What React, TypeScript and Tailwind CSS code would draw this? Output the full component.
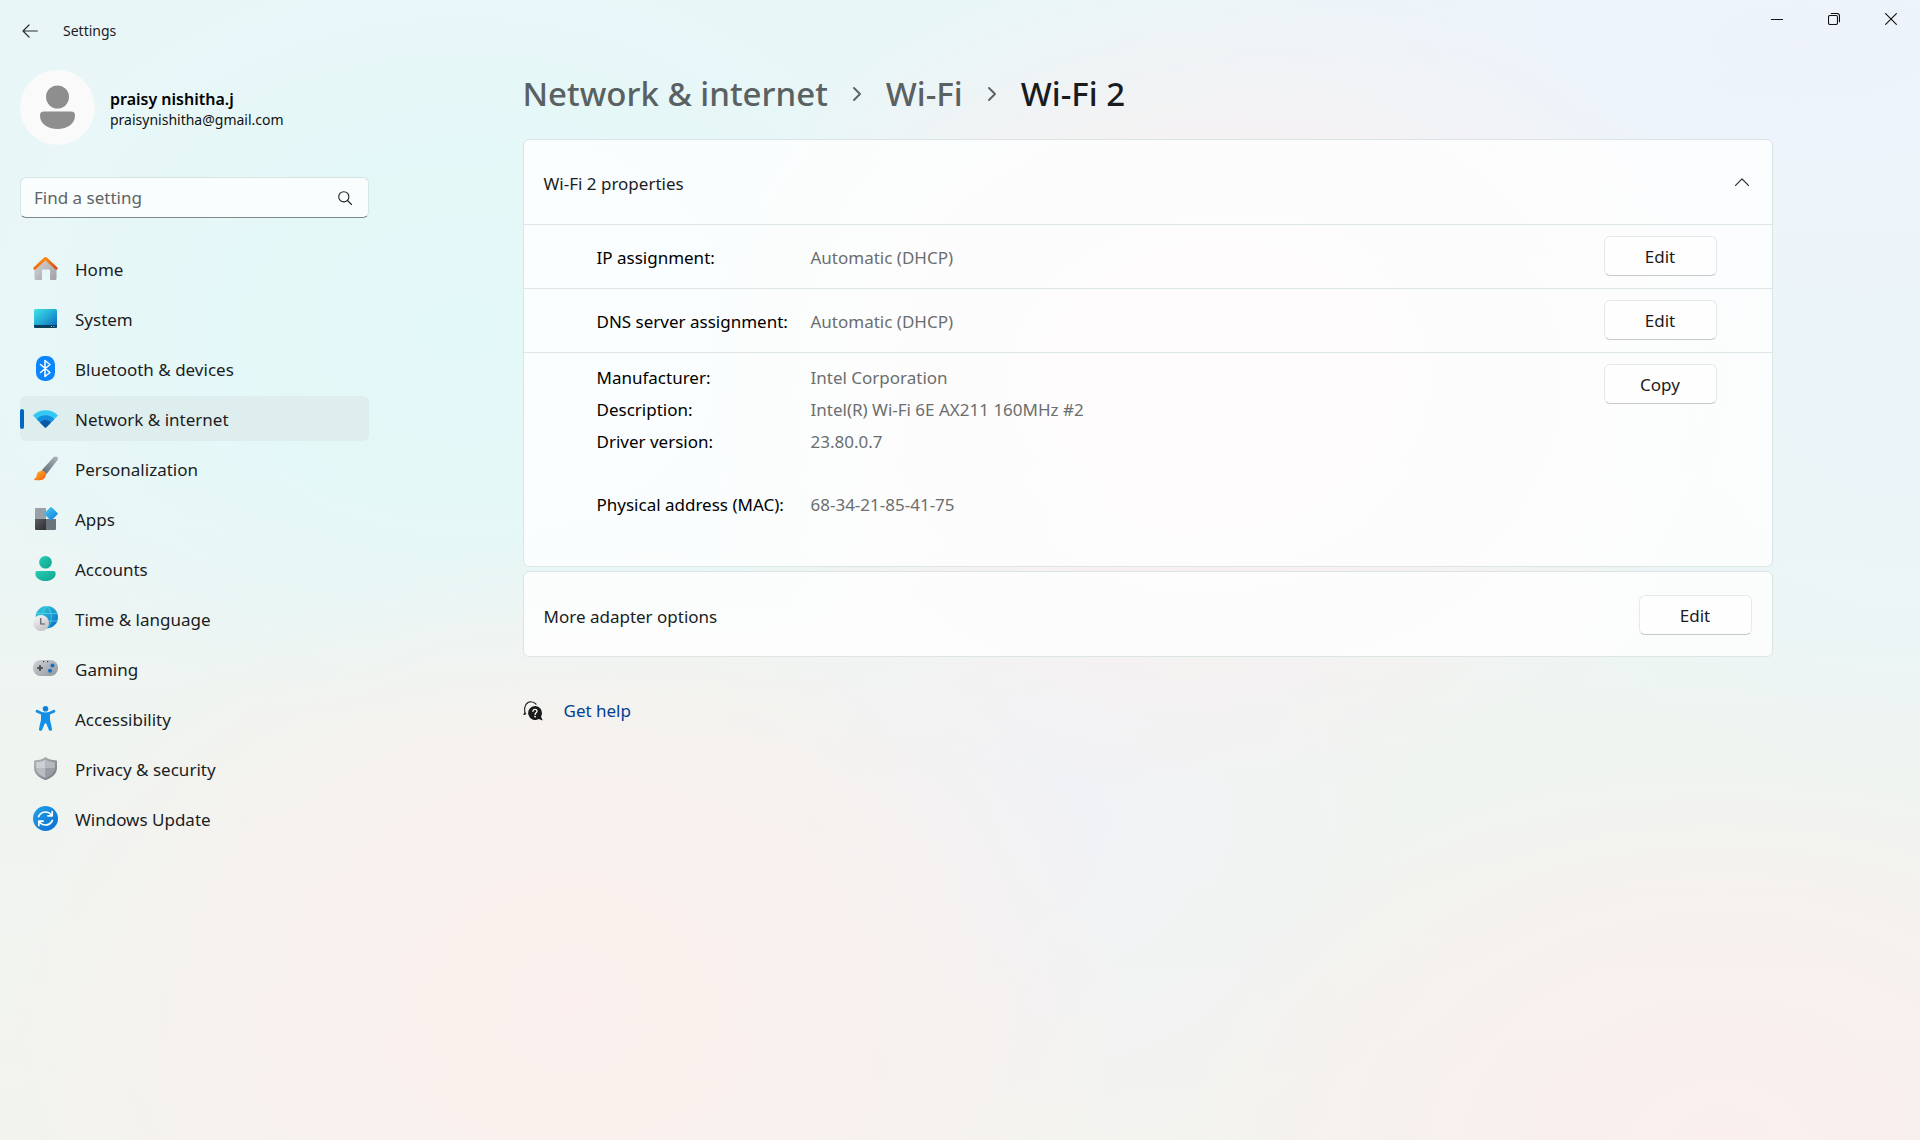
import React, { useState } from "react";

function HomeIcon() {
  return (
    <svg viewBox="0 0 25 25" className="size-[25px]" aria-hidden="true">
      <defs>
        <linearGradient id="home-wall" x1="0" y1="0" x2="1" y2="1">
          <stop offset="0" stopColor="#d8d8da" />
          <stop offset="1" stopColor="#9f9fa3" />
        </linearGradient>
        <linearGradient id="home-roof" x1="0" y1="0" x2="1" y2="0">
          <stop offset="0" stopColor="#f06a0c" />
          <stop offset="0.5" stopColor="#fb8a0c" />
          <stop offset="1" stopColor="#d9480c" />
        </linearGradient>
      </defs>
      <path d="M1.5 12 12.5 2l11 10v10.500a1.500 1.500 0 0 1-1.500 1.500h-4a1 1 0 0 1-1-1v-8.500a1 1 0 0 0-1-1H10a1 1 0 0 0-1 1V23a1 1 0 0 1-1 1H3a1.500 1.500 0 0 1-1.500-1.500Z" fill="url(#home-wall)" />
      <path d="m1.800 12.200 10.700-9.800 10.700 9.800" fill="none" stroke="url(#home-roof)" strokeWidth="2.900" strokeLinecap="round" strokeLinejoin="round" />
    </svg>
  );
}

function SystemIcon() {
  return (
    <svg viewBox="0 0 25 25" className="size-[25px]" aria-hidden="true">
      <defs>
        <linearGradient id="sys" x1="0" y1="0" x2="1" y2="1">
          <stop offset="0" stopColor="#3fe3e4" />
          <stop offset="0.500" stopColor="#22a9d6" />
          <stop offset="1" stopColor="#0a62b8" />
        </linearGradient>
      </defs>
      <rect x="1" y="3" width="23" height="19" rx="1.500" fill="url(#sys)" />
      <path d="M1 19h23v1.500a1.500 1.500 0 0 1-1.500 1.500h-20A1.500 1.500 0 0 1 1 20.500Z" fill="#0b3f5e" />
      <path d="M18 20h1v1h-1zM20.500 20h1v1h-1z" fill="#8fd0ea" />
    </svg>
  );
}

function BluetoothIcon() {
  return (
    <svg viewBox="0 0 25 25" className="size-[25px]" aria-hidden="true">
      <rect x="3" y="0" width="19" height="25" rx="8.500" fill="#0a84ff" />
      <path d="m7.500 8.500 9.500 8-5 4V4.500l5 4-9.500 8" fill="none" stroke="#fff" strokeWidth="1.500" strokeLinejoin="round" strokeLinecap="round" />
    </svg>
  );
}

function NetworkIcon() {
  return (
    <svg viewBox="0 0 25 25" className="size-[25px]" aria-hidden="true">
      <defs>
        <clipPath id="wifi-fan">
          <path d="M0 9.500C6 2.500 19 2.500 25 9.500L13.300 21.300a1.200 1.200 0 0 1-1.600 0Z" />
        </clipPath>
      </defs>
      <g clipPath="url(#wifi-fan)">
        <rect width="25" height="25" fill="#35c8f5" />
        <circle cx="12.500" cy="21" r="11.800" fill="#158fdc" />
        <circle cx="12.500" cy="21" r="7" fill="#0c56a4" />
      </g>
    </svg>
  );
}

function PersonalizationIcon() {
  return (
    <svg viewBox="0 0 25 25" className="size-[25px]" aria-hidden="true">
      <defs>
        <linearGradient id="brush-handle" x1="1" y1="0" x2="0" y2="1">
          <stop offset="0" stopColor="#aeb6bd" />
          <stop offset="1" stopColor="#5d6872" />
        </linearGradient>
        <linearGradient id="brush-tip" x1="0" y1="0" x2="1" y2="1">
          <stop offset="0" stopColor="#fdb92c" />
          <stop offset="1" stopColor="#ef5a12" />
        </linearGradient>
      </defs>
      <path d="M20.500 1.200C22 0 23.800.3 24.400 1c.7.800.8 2.300-.2 3.600L13.400 18.200 8.600 14.400Z" fill="url(#brush-handle)" />
      <path d="M8.200 14.800c2.600-.5 5.300 1.800 4.700 4.600-.8 4-5.500 5.800-11.400 4.500-.8-.2-.8-.8-.1-1.100 2-.9 2-2.300 2.400-4.200.5-2.200 2.200-3.500 4.400-3.800Z" fill="url(#brush-tip)" />
    </svg>
  );
}

function AppsIcon() {
  return (
    <svg viewBox="0 0 25 25" className="size-[25px]" aria-hidden="true">
      <defs>
        <linearGradient id="apps-tile" x1="0" y1="0" x2="1" y2="1">
          <stop offset="0" stopColor="#46d0f4" />
          <stop offset="1" stopColor="#0f78dc" />
        </linearGradient>
        <linearGradient id="apps-dark" x1="0" y1="0" x2="1" y2="1">
          <stop offset="0" stopColor="#5a5d61" />
          <stop offset="1" stopColor="#2c2e31" />
        </linearGradient>
      </defs>
      <path d="M3 2h10v11H2V3a1 1 0 0 1 1-1Z" fill="#98a0a8" />
      <path d="M2 13h11v11H3a1 1 0 0 1-1-1Z" fill="url(#apps-dark)" />
      <path d="M13 13h10v10a1 1 0 0 1-1 1h-9Z" fill="#6a737b" />
      <path d="M17.200 1.400a1.200 1.200 0 0 1 1.700 0l5.500 5.500a1.200 1.200 0 0 1 0 1.700l-5.500 5.500a1.200 1.200 0 0 1-1.700 0l-5.500-5.500a1.200 1.200 0 0 1 0-1.700Z" fill="url(#apps-tile)" />
    </svg>
  );
}

function AccountsIcon() {
  return (
    <svg viewBox="0 0 25 25" className="size-[25px]" aria-hidden="true">
      <defs>
        <linearGradient id="acct" x1="0" y1="0" x2="1" y2="1">
          <stop offset="0" stopColor="#27cdb5" />
          <stop offset="1" stopColor="#0fa38d" />
        </linearGradient>
      </defs>
      <circle cx="12.500" cy="6.300" r="6.300" fill="url(#acct)" />
      <path d="M4.500 15h16a2.200 2.200 0 0 1 2.200 2.200c0 4.600-4.200 7.800-10.200 7.800S2.300 21.800 2.300 17.200A2.200 2.200 0 0 1 4.500 15Z" fill="url(#acct)" />
    </svg>
  );
}

function TimeIcon() {
  return (
    <svg viewBox="0 0 25 25" className="size-[25px]" aria-hidden="true">
      <defs>
        <linearGradient id="globe" x1="0" y1="0" x2="1" y2="1">
          <stop offset="0" stopColor="#35d0dc" />
          <stop offset="1" stopColor="#0a6cc4" />
        </linearGradient>
        <linearGradient id="clock" x1="0" y1="0" x2="0.600" y2="1">
          <stop offset="0" stopColor="#fafafa" />
          <stop offset="1" stopColor="#c4c4c8" />
        </linearGradient>
      </defs>
      <circle cx="13.800" cy="11.200" r="11.200" fill="url(#globe)" />
      <path d="M3.500 7.500h20.600M3.500 15h20.600M13.800 0c-6 6-6 16.500 0 22.400M13.800 0c6 6 6 16.500 0 22.400" fill="none" stroke="#5fe0ee" strokeOpacity="0.700" strokeWidth="0.900" />
      <circle cx="8" cy="17" r="8" fill="url(#clock)" />
      <path d="M7.800 12v6h4.200" fill="none" stroke="#55585c" strokeWidth="1.200" />
    </svg>
  );
}

function GamingIcon() {
  return (
    <svg viewBox="0 0 25 25" className="size-[25px]" aria-hidden="true">
      <defs>
        <linearGradient id="pad" x1="0" y1="0" x2="1" y2="1">
          <stop offset="0" stopColor="#d2d4d8" />
          <stop offset="1" stopColor="#90959c" />
        </linearGradient>
      </defs>
      <rect x="0" y="4" width="25" height="16" rx="7.500" fill="url(#pad)" />
      <path d="M7 9v6M4 12h6" stroke="#3f4347" strokeWidth="1.600" />
      <path d="M10 5h1.200v1.200H10zM14 5h1.200v1.200H14z" fill="#3f4347" />
      <circle cx="19.500" cy="9.500" r="2" fill="#0f6fca" />
      <circle cx="17" cy="14.700" r="2" fill="#0f6fca" />
    </svg>
  );
}

function AccessibilityIcon() {
  return (
    <svg viewBox="0 0 25 25" className="size-[25px]" aria-hidden="true">
      <circle cx="12.500" cy="2.800" r="2.800" fill="#0f80dc" />
      <path d="M4.600 4C7 5 9.500 6.500 12.500 6.500S18 5 20.400 4c1.800-.7 2.700 1.700 1.200 2.500-1.600.8-3 1.500-4.600 2.100v5.400c.6 2.700 1.500 5.600 2 8.900.3 2-2.500 2.700-3.200.8l-2.300-5.600c-.5-1-1.500-1-2 0l-2.300 5.600c-.7 1.900-3.500 1.200-3.200-.8.500-3.300 1.400-6.200 2-8.900V8.600C6.400 8 5 7.300 3.400 6.500 1.900 5.700 2.800 3.300 4.600 4Z" fill="#1290e8" />
    </svg>
  );
}

function PrivacyIcon() {
  return (
    <svg viewBox="0 0 25 25" className="size-[25px]" aria-hidden="true">
      <defs>
        <linearGradient id="shield" x1="0" y1="0" x2="1" y2="1">
          <stop offset="0" stopColor="#b3b7bc" />
          <stop offset="1" stopColor="#74797f" />
        </linearGradient>
      </defs>
      <path d="M12.500 1c3 2.400 6.300 3.200 10.200 3.300.8 0 1.300.5 1.300 1.200v6.200c0 5.500-4.200 9.800-11 12.200a1.500 1.500 0 0 1-1 0C5.200 21.500 1 17.200 1 11.700V5.500c0-.7.500-1.200 1.300-1.200C6.200 4.200 9.500 3.400 12.500 1Z" fill="url(#shield)" />
      <path d="M12.500 3.500V12H3.200V6.300c3.600-.1 6.500-1 9.300-2.800Z" fill="#ccd0d4" />
      <path d="M12.500 3.500c2.800 1.800 5.700 2.700 9.300 2.800V12h-9.300Z" fill="#b6babf" />
      <path d="M3.200 12h9.300v9.900C7 19.700 3.300 16.400 3.200 12Z" fill="#b9bdc2" />
      <path d="M12.500 12h9.300c-.1 4.400-3.800 7.700-9.300 9.900Z" fill="#989da3" />
    </svg>
  );
}

function UpdateIcon() {
  return (
    <svg viewBox="0 0 25 25" className="size-[25px]" aria-hidden="true">
      <defs>
        <linearGradient id="upd" x1="0" y1="0" x2="1" y2="1">
          <stop offset="0" stopColor="#22a2ea" />
          <stop offset="1" stopColor="#0a6cd0" />
        </linearGradient>
      </defs>
      <circle cx="12.500" cy="12.500" r="12.500" fill="url(#upd)" />
      <g fill="none" stroke="#fff" strokeWidth="1.700" strokeLinecap="round" strokeLinejoin="round">
        <path d="M5.600 10.500c1.500-3 4-4.500 6.900-4.500 2.600 0 4.800 1.200 6.200 3.400" />
        <path d="M19.200 5.500v4.300h-4.300" />
        <path d="M19.400 14.500c-1.500 3-4 4.500-6.900 4.500-2.600 0-4.800-1.200-6.200-3.400" />
        <path d="M5.800 19.500v-4.300h4.300" />
      </g>
    </svg>
  );
}

const navItems = [
  { label: "Home", Icon: HomeIcon },
  { label: "System", Icon: SystemIcon },
  { label: "Bluetooth & devices", Icon: BluetoothIcon },
  { label: "Network & internet", Icon: NetworkIcon },
  { label: "Personalization", Icon: PersonalizationIcon },
  { label: "Apps", Icon: AppsIcon },
  { label: "Accounts", Icon: AccountsIcon },
  { label: "Time & language", Icon: TimeIcon },
  { label: "Gaming", Icon: GamingIcon },
  { label: "Accessibility", Icon: AccessibilityIcon },
  { label: "Privacy & security", Icon: PrivacyIcon },
  { label: "Windows Update", Icon: UpdateIcon },
];

function ActionButton({ children, label }: { children: React.ReactNode; label: string }) {
  return (
    <button
      type="button"
      aria-label={label}
      className="h-10 w-[113px] shrink-0 rounded-md border border-[#e6e9ea] border-b-[#c6c9ca] bg-[#fefefe] pt-0.5 text-center text-[#1b1b1b]"
    >
      {children}
    </button>
  );
}

function Crumb() {
  return (
    <svg viewBox="0 0 10 16" className="h-4 w-2.5 shrink-0" aria-hidden="true">
      <path d="m2 2 6 6-6 6" fill="none" stroke="#5c6263" strokeWidth="1.900" strokeLinecap="round" strokeLinejoin="round" />
    </svg>
  );
}

function TitleBar() {
  return (
    <header className="flex h-[62px] items-start justify-between pr-px">
      <div className="flex h-[62px] items-center pl-5">
        <button type="button" aria-label="Back" className="flex size-5 items-center justify-center">
          <svg viewBox="0 0 16 14" className="h-3.5 w-4" fill="none" stroke="#2b2f30" strokeWidth="1.200" strokeLinecap="round" strokeLinejoin="round" aria-hidden="true">
            <path d="M15.300 7H1M7 1 1 7l6 6" />
          </svg>
        </button>
        <h1 className="ml-[23px] text-sm leading-5">Settings</h1>
      </div>
      <div className="flex h-[38px]">
        <button type="button" aria-label="Minimize" className="flex w-[57px] items-center justify-center">
          <svg viewBox="0 0 12 12" className="size-3" aria-hidden="true">
            <path d="M0 6.500h12" stroke="#111" />
          </svg>
        </button>
        <button type="button" aria-label="Restore" className="flex w-[57px] items-center justify-center">
          <svg viewBox="0 0 12 12" className="size-3" fill="none" stroke="#111" strokeWidth="1.100" aria-hidden="true">
            <rect x="0.500" y="2.500" width="9" height="9" rx="1.500" />
            <path d="M2.800.5H9a2.500 2.500 0 0 1 2.500 2.500v6.200" />
          </svg>
        </button>
        <button type="button" aria-label="Close" className="flex w-[57px] items-center justify-center">
          <svg viewBox="0 0 12 12" className="size-3" aria-hidden="true">
            <path d="m.3.300 11.400 11.400M11.700.3.300 11.700" stroke="#111" strokeWidth="1.100" />
          </svg>
        </button>
      </div>
    </header>
  );
}

function Sidebar() {
  const [active, setActive] = useState("Network & internet");
  return (
    <aside className="w-[375px] shrink-0 pt-2 pr-1.5 pl-5">
      <div className="flex items-center gap-[15px]">
        <svg viewBox="0 0 75 75" className="size-[75px] shrink-0" aria-hidden="true">
          <circle cx="37.500" cy="37.500" r="37.500" fill="#fafafa" />
          <circle cx="37.500" cy="27" r="11.500" fill="#8e8e8e" />
          <path d="M24 41.500h27a4 4 0 0 1 4 4C55 53.500 47.800 59 37.500 59S20 53.500 20 45.500a4 4 0 0 1 4-4Z" fill="#8e8e8e" />
        </svg>
        <div className="pt-0.5">
          <p className="text-base leading-[22px] font-semibold text-black">praisy nishitha.j</p>
          <p className="text-sm leading-[19px] text-[#111]">praisynishitha@gmail.com</p>
        </div>
      </div>
      <label className="mt-8 flex h-[41px] items-center rounded-md border border-[#d6e4e5] border-b-[#7f8889] bg-white/75 pr-4 pl-[13px]">
        <input
          type="text"
          placeholder="Find a setting"
          aria-label="Find a setting"
          className="min-w-0 flex-1 bg-transparent outline-none placeholder:text-[#5d6364]"
        />
        <svg viewBox="0 0 14 14" className="size-3.5 shrink-0" fill="none" stroke="#222" strokeWidth="1.100" strokeLinecap="round" aria-hidden="true">
          <circle cx="5.800" cy="5.800" r="5.100" />
          <path d="m9.500 9.500 4 4" />
        </svg>
      </label>
      <nav className="mt-7">
        <ul className="flex flex-col gap-[5px]">
          {navItems.map(({ label, Icon }) => (
            <li key={label}>
              <a
                href="#"
                aria-current={label === active ? "page" : undefined}
                onClick={() => setActive(label)}
                className={
                  label === active
                    ? "flex h-[45px] items-center rounded-md bg-[#deeeee]"
                    : "flex h-[45px] items-center rounded-md"
                }
              >
                <span className={label === active ? "h-5 w-1 rounded-full bg-[#0067c0]" : "h-5 w-1"} />
                <span className="ml-[9px]">
                  <Icon />
                </span>
                <span className="ml-[17px] pt-0.5">{label}</span>
              </a>
            </li>
          ))}
        </ul>
      </nav>
    </aside>
  );
}

function AssignmentRow({ name, value }: { name: string; value: string }) {
  return (
    <div className="flex items-center border-t border-[#dde6e7] pt-[11px] pr-[55px] pb-3 pl-[73px]">
      <dl className="flex flex-1 pt-1">
        <dt className="w-[214px] shrink-0 text-black">{name}</dt>
        <dd className="text-[#6b6e6f]">{value}</dd>
      </dl>
      <ActionButton label={"Edit " + name.replace(":", "")}>Edit</ActionButton>
    </div>
  );
}

const adapterDetails = [
  { name: "Manufacturer:", value: "Intel Corporation" },
  { name: "Description:", value: "Intel(R) Wi-Fi 6E AX211 160MHz #2" },
  { name: "Driver version:", value: "23.80.0.7" },
];

function PropertiesCard() {
  const [open, setOpen] = useState(true);
  return (
    <section className="rounded-md border border-[#dbe5e6] bg-white/80">
      <button
        type="button"
        aria-expanded={open}
        onClick={() => setOpen(!open)}
        className="flex h-[84px] w-full items-center justify-between pr-[23px] pl-5 text-left"
      >
        <span className="pt-1">Wi-Fi 2 properties</span>
        <svg viewBox="0 0 14 8" className="h-2 w-3.5" aria-hidden="true">
          <path d="m.6 7.400 6.400-6.500 6.400 6.500" fill="none" stroke="#333" strokeWidth="1.300" strokeLinecap="round" strokeLinejoin="round" />
        </svg>
      </button>
      {open && (
        <div>
          <AssignmentRow name="IP assignment:" value="Automatic (DHCP)" />
          <AssignmentRow name="DNS server assignment:" value="Automatic (DHCP)" />
          <div className="flex items-start border-t border-[#dde6e7] pt-[9px] pr-[55px] pb-11 pl-[73px]">
            <dl className="flex-1 leading-8">
              {adapterDetails.map((row) => (
                <div key={row.name} className="flex">
                  <dt className="w-[214px] shrink-0 text-black">{row.name}</dt>
                  <dd className="text-[#6b6e6f]">{row.value}</dd>
                </div>
              ))}
              <div className="mt-[31px] mb-px flex">
                <dt className="w-[214px] shrink-0 text-black">Physical address (MAC):</dt>
                <dd className="text-[#6b6e6f]">68-34-21-85-41-75</dd>
              </div>
            </dl>
            <div className="pt-0.5">
              <ActionButton label="Copy adapter details">Copy</ActionButton>
            </div>
          </div>
        </div>
      )}
    </section>
  );
}

export default function App() {
  return (
    <div className="flex min-h-screen flex-col bg-[#f0f4f3] bg-[radial-gradient(ellipse_560px_460px_at_570px_1000px,#fbf0ed_0%,#fbf0edaa_50%,#fbf0ed00_100%),radial-gradient(ellipse_540px_380px_at_1720px_1140px,#faefed_0%,#faefedaa_50%,#faefed00_100%),radial-gradient(ellipse_540px_420px_at_1220px_380px,#fbeff0_0%,#fbeff0bb_50%,#fbeff000_100%),radial-gradient(ellipse_360px_360px_at_1060px_820px,#f1f2f6_0%,#f1f2f688_50%,#f1f2f600_100%),radial-gradient(ellipse_520px_400px_at_460px_330px,#e3f8f8_0%,#e3f8f8aa_50%,#e3f8f800_100%),radial-gradient(ellipse_700px_300px_at_1800px_40px,#eef3fb_0%,#eef3fbaa_50%,#eef3fb00_100%),radial-gradient(ellipse_400px_480px_at_1900px_340px,#ebf4f8_0%,#ebf4f8aa_50%,#ebf4f800_100%),linear-gradient(to_bottom,#e9f6f8_0%,#e9f6f7_40%,#eff4f0_65%,#f3f3ee_100%)] font-['Noto_Sans','Open_Sans',sans-serif] text-[17px] leading-6 text-[#1b1d1e]">
      <TitleBar />
      <div className="flex flex-1">
        <Sidebar />
        <main className="flex min-w-0 flex-1 justify-center px-8">
          <div className="w-full max-w-[1250px]">
            <nav aria-label="Breadcrumb" className="flex h-16 items-center gap-6 text-[33px] leading-[48px] font-medium">
              <a href="#" className="text-[#5a6162]">Network &amp; internet</a>
              <Crumb />
              <a href="#" className="text-[#5a6162]">Wi-Fi</a>
              <Crumb />
              <h2 className="text-[#191b1c]">Wi-Fi 2</h2>
            </nav>
            <div className="mt-[13px] flex flex-col gap-1">
              <PropertiesCard />
              <section className="flex h-[86px] items-center justify-between rounded-md border border-[#dde4e4] bg-white/80 pt-0.5 pr-5 pl-5">
                <h3 className="pt-1">More adapter options</h3>
                <ActionButton label="Edit more adapter options">Edit</ActionButton>
              </section>
            </div>
            <div className="mt-[38px] flex items-center gap-[21px] pt-1">
              <svg viewBox="0 0 20 20" className="size-5" aria-hidden="true">
                <path d="M1 13.500c.8-.7 1-1.700.8-3C.8 5.500 3.500.8 7.800.8c2.200 0 4 .9 5.200 2.400" fill="none" stroke="#1a1a1a" strokeWidth="1.100" strokeLinecap="round" />
                <path d="m.4 13.700 3-.4-1-2Z" fill="#1a1a1a" />
                <path d="M12 5a7 7 0 0 1 7 7c0 1.500-.4 2.700-1 3.800l1.800 3.600-4.200-1.300A7 7 0 1 1 12 5Z" fill="#1a1a1a" />
                <path d="M9.900 10.300c.2-2.700 4.200-2.500 4.100-.1 0 1.500-1.900 1.600-1.900 3.200" fill="none" stroke="#fff" strokeWidth="1.300" strokeLinecap="round" />
                <circle cx="12.100" cy="15.600" r="0.900" fill="#fff" />
              </svg>
              <a href="#" className="text-[#003e92]">Get help</a>
            </div>
          </div>
        </main>
      </div>
    </div>
  );
}
